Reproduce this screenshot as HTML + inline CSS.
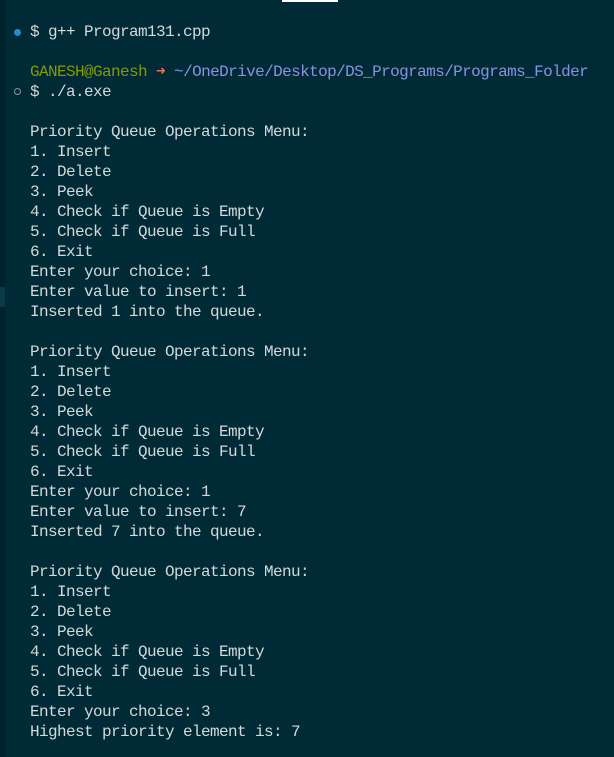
<!DOCTYPE html>
<html><head><style>
html,body{margin:0;padding:0;}
body{width:614px;height:757px;background:#002b36;position:relative;overflow:hidden;font-family:"Liberation Mono",monospace;font-size:16px;letter-spacing:-0.6px;color:#d3d9d9;}
.strip{position:absolute;left:0;top:0;width:5px;height:757px;background:#00232d;}
.hl{position:absolute;left:0;top:287px;width:5px;height:20px;background:#0a3a48;}
.bar{position:absolute;left:282px;top:0;width:56px;height:2px;background:#fff;}
pre{position:absolute;left:30px;top:22px;margin:0;font:inherit;line-height:20px;white-space:pre;}
.g{color:#859900}.o{color:#e4775a;font-weight:bold}.b{color:#8a92e0}
.d1{position:absolute;left:14px;top:29px;width:7px;height:7px;border-radius:50%;background:#268bd2;}
.d2{position:absolute;left:14px;top:88px;width:5px;height:5px;border-radius:50%;border:1px solid #8a9a9e;}
</style></head><body>
<div class="strip"></div><div class="hl"></div><div class="bar"></div>
<div class="d1"></div><div class="d2"></div>
<pre>$ g++ Program131.cpp

<span class="g">GANESH@Ganesh</span> <span class="o">➜</span> <span class="b">~/OneDrive/Desktop/DS_Programs/Programs_Folder</span>
$ ./a.exe

Priority Queue Operations Menu:
1. Insert
2. Delete
3. Peek
4. Check if Queue is Empty
5. Check if Queue is Full
6. Exit
Enter your choice: 1
Enter value to insert: 1
Inserted 1 into the queue.

Priority Queue Operations Menu:
1. Insert
2. Delete
3. Peek
4. Check if Queue is Empty
5. Check if Queue is Full
6. Exit
Enter your choice: 1
Enter value to insert: 7
Inserted 7 into the queue.

Priority Queue Operations Menu:
1. Insert
2. Delete
3. Peek
4. Check if Queue is Empty
5. Check if Queue is Full
6. Exit
Enter your choice: 3
Highest priority element is: 7</pre>
</body></html>
